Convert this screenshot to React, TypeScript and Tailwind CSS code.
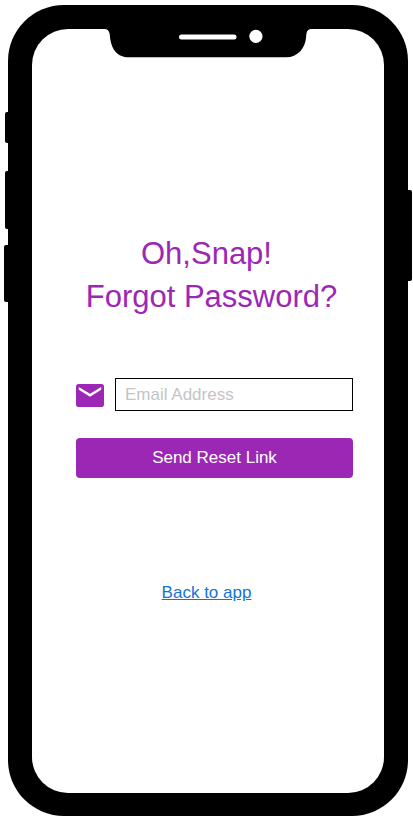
import { useState } from "react";

function MailIcon() {
  return (
    <svg viewBox="0 0 28 23" className="h-[23px] w-7" aria-hidden="true">
      <rect width="28" height="23" rx="2.8" fill="#9c27b5" />
      <path d="M2.800 3V5.800L14 12.800L25.200 5.800V3L14 9.800z" fill="#fff" />
    </svg>
  );
}

function Notch() {
  return (
    <svg
      viewBox="0 0 208 29"
      className="mx-auto block h-[29px] w-[208px]"
      aria-hidden="true"
    >
      <path
        d="M0 0H1C4 .3 5 2 5.700 5C6.500 16 10 28.300 25 28.300H182C194 28.300 201 19 202 9C202.500 3 203 .3 207 0z"
        fill="#000"
      />
      <rect x="75" y="5.500" width="57.500" height="5" rx="2.500" fill="#fff" />
      <circle cx="151.900" cy="7.300" r="6.600" fill="#fff" />
    </svg>
  );
}

function SideButtons() {
  return (
    <>
      <span className="absolute top-[107px] -left-[3px] h-[31px] w-2 rounded-l-xs bg-black" />
      <span className="absolute top-[166px] -left-[3px] h-[58px] w-2 rounded-l-xs bg-black" />
      <span className="absolute top-[240px] -left-1 h-[57px] w-2 rounded-l-xs bg-black" />
      <span className="absolute top-[185px] -right-1 h-[91px] w-2 rounded-r-xs bg-black" />
    </>
  );
}

export default function App() {
  const [email, setEmail] = useState("");

  return (
    <div className="flex min-h-screen bg-white pt-[5px] pr-[5px] pb-px pl-2 font-['Liberation_Sans',Arial,sans-serif]">
      <div className="relative flex min-w-0 flex-1 rounded-[56px] bg-black px-6 pt-6 pb-[23px]">
        <SideButtons />
        <main className="flex min-w-0 flex-1 flex-col rounded-[36px] bg-white">
          <Notch />
          <h1 className="mt-[174px] pr-[3px] text-center text-[31px] leading-[43px] text-[#9c27b5]">
            <span className="block">Oh,Snap!</span>
            <span className="block pl-[10px]">Forgot Password?</span>
          </h1>
          <form
            className="mt-[60px] flex flex-col gap-[27px] pr-[31px] pl-11"
            onSubmit={(event) => event.preventDefault()}
          >
            <div className="flex items-center gap-[11px]">
              <label htmlFor="email" aria-label="Email Address" className="shrink-0 pt-px">
                <MailIcon />
              </label>
              <input
                id="email"
                type="email"
                value={email}
                onChange={(event) => setEmail(event.target.value)}
                placeholder="Email Address"
                className="h-[33px] min-w-0 flex-1 border border-black bg-white px-[9px] text-[17px] text-black outline-none placeholder:text-[#c4c4c4]"
              />
            </div>
            <button
              type="submit"
              className="h-10 rounded bg-[#9c27b5] text-[17px] text-white"
            >
              Send Reset Link
            </button>
          </form>
          <a
            href="#app"
            className="mt-[103px] mr-[3px] self-center text-[17px] leading-6 text-[#1273de] underline"
          >
            Back to app
          </a>
        </main>
      </div>
    </div>
  );
}
